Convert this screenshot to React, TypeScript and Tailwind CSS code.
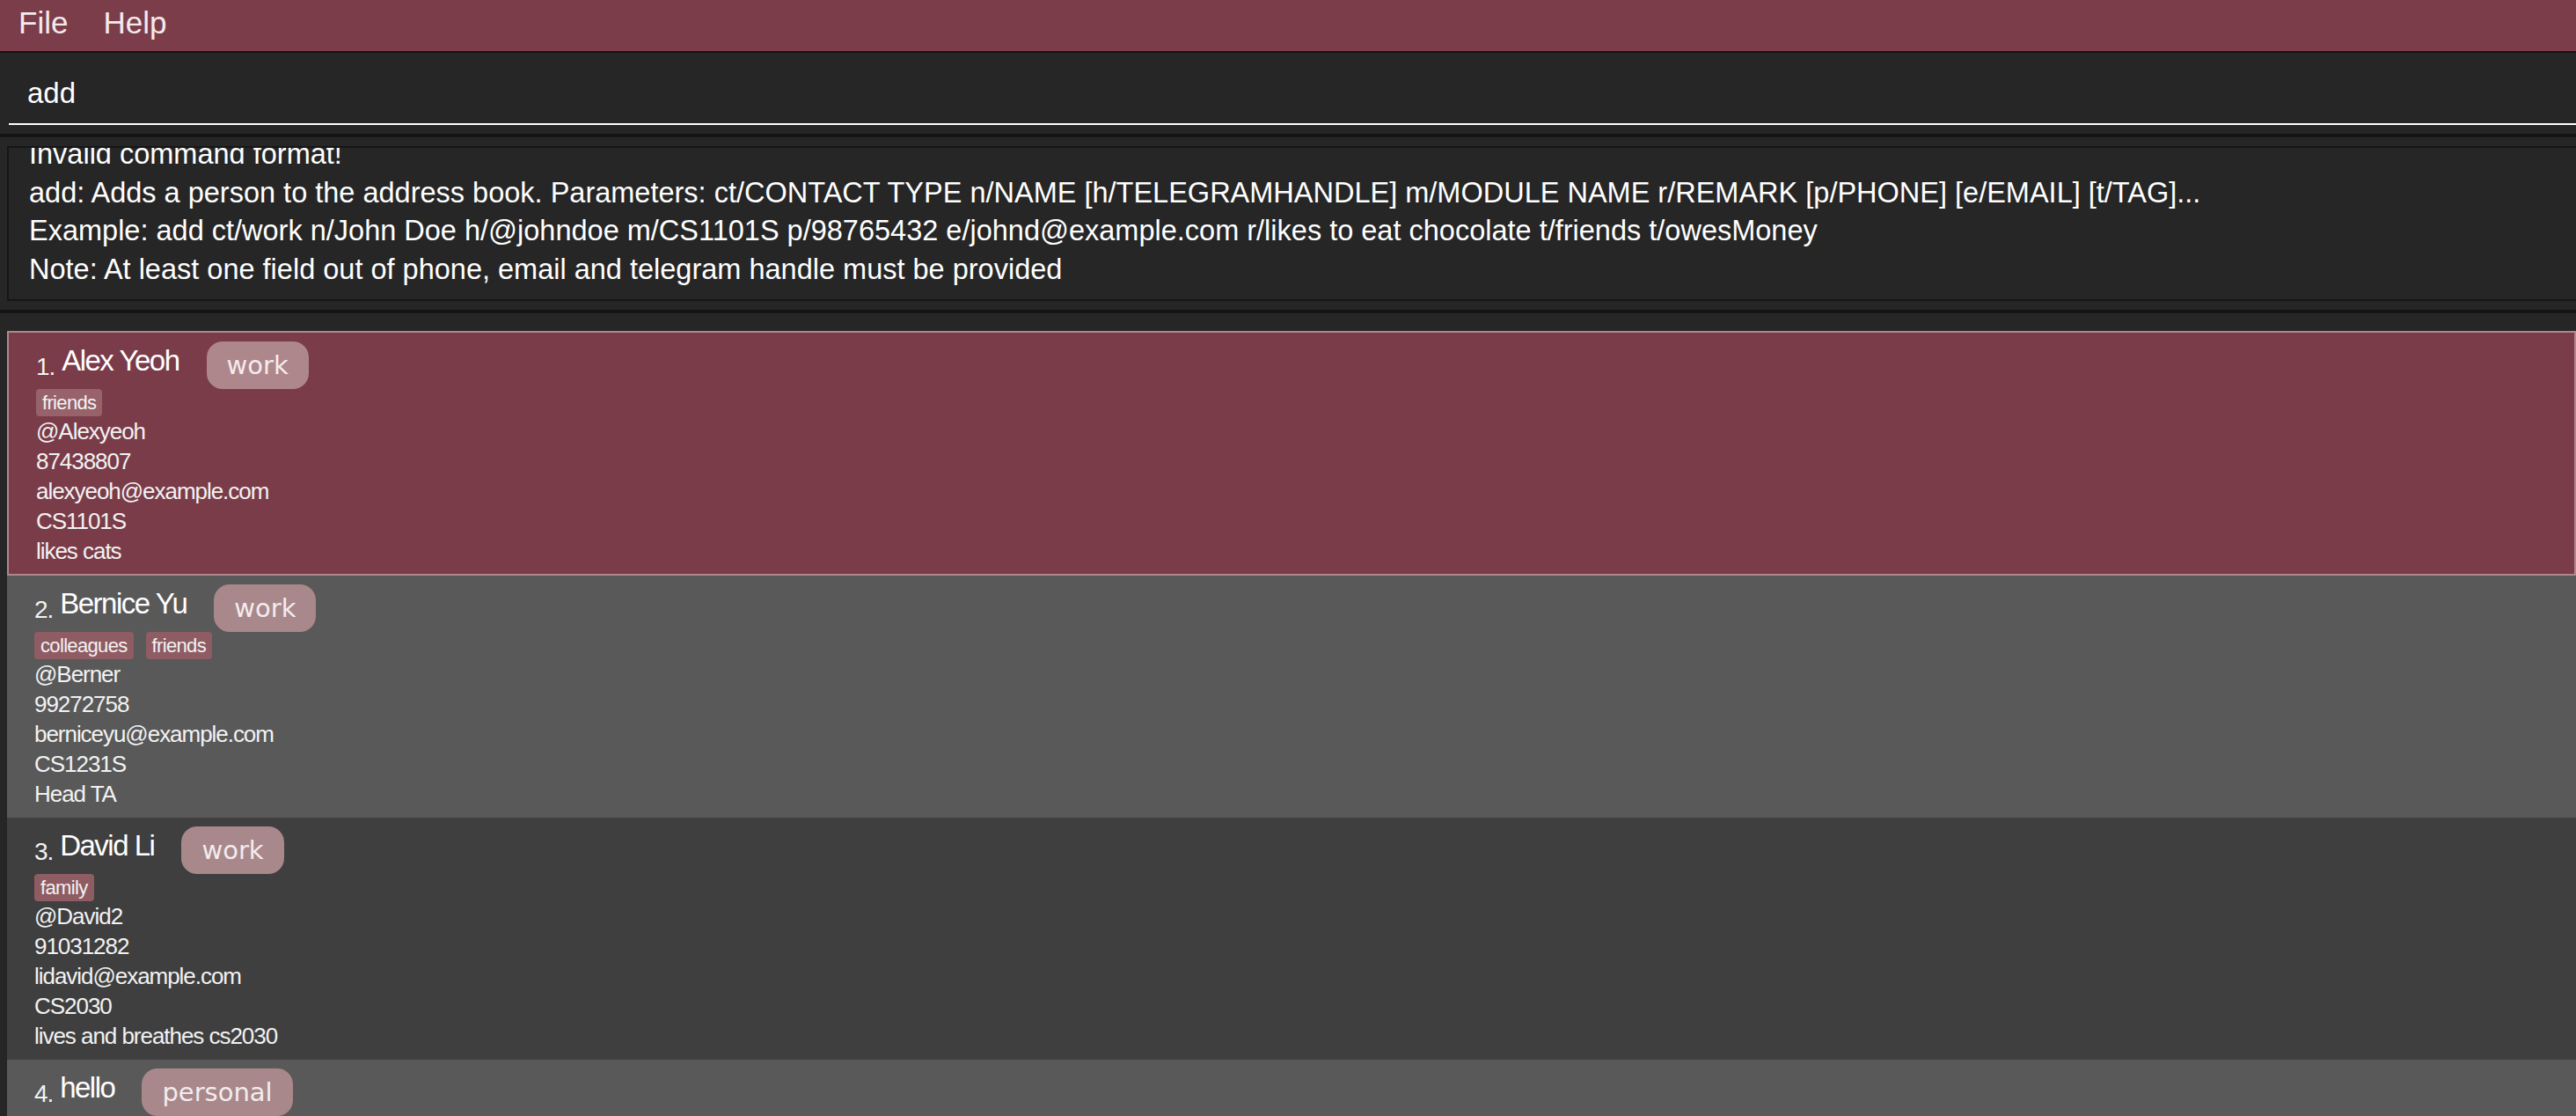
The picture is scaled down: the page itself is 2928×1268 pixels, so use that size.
import React from 'react';

interface IPerson {
  name: string
  type: string
  tags: string[]
  handle: string
  phone: string
  email: string
  module: string
  remark: string
}

const people: IPerson[] = [
  { name: 'Alex Yeoh', type: 'work', tags: ['friends'], handle: '@Alexyeoh', phone: '87438807', email: 'alexyeoh@example.com', module: 'CS1101S', remark: 'likes cats' },
  { name: 'Bernice Yu', type: 'work', tags: ['colleagues', 'friends'], handle: '@Berner', phone: '99272758', email: 'berniceyu@example.com', module: 'CS1231S', remark: 'Head TA' },
  { name: 'David Li', type: 'work', tags: ['family'], handle: '@David2', phone: '91031282', email: 'lidavid@example.com', module: 'CS2030', remark: 'lives and breathes cs2030' },
  { name: 'hello', type: 'personal', tags: ['friends'], handle: '@hello', phone: '12345678', email: 'hello@example.com', module: 'CS2103T', remark: 'new contact' },
];

const resultLines = [
  'Invalid command format!',
  'add: Adds a person to the address book. Parameters: ct/CONTACT TYPE n/NAME [h/TELEGRAMHANDLE] m/MODULE NAME r/REMARK [p/PHONE] [e/EMAIL] [t/TAG]...',
  'Example: add ct/work n/John Doe h/@johndoe m/CS1101S p/98765432 e/johnd@example.com r/likes to eat chocolate t/friends t/owesMoney',
  'Note: At least one field out of phone, email and telegram handle must be provided',
];

function PersonCard(props: { person: IPerson, index: number }) {
  const selected = props.index === 0;
  const bg = selected
    ? 'bg-[#7a3c49] border-2 border-[#b0878d] pt-[10px] pb-[9px]'
    : props.index % 2 === 1
      ? 'bg-[#595959] pt-[10px] pb-[10px]'
      : 'bg-[#3f3f3f] pt-[10px] pb-[10px]';
  const chip = selected ? 'bg-[#ae878c]' : 'bg-[#a8888b]';
  const tag = selected ? 'bg-[#97626a]' : 'bg-[#8f5c64]';

  return (
    <div className={`${bg} pl-[31px] text-[#f2f2f2]`}>
      <div className="flex items-start h-[54px]">
        <span className="text-[28px] leading-[34px] mt-[12px] tracking-[-0.04em]">{props.index + 1}.</span>
        <span className="text-[33px] leading-[40px] mt-[2px] ml-[8px] tracking-[-0.045em] text-white">{props.person.name}</span>
        <span className={`${chip} ml-[31px] h-[54px] px-[23px] pt-[9px] rounded-[18px] text-[29px] leading-[36px] text-[#f4ecee] font-['DejaVu_Sans',sans-serif]`}>
          {props.person.type}
        </span>
      </div>
      <div className="flex gap-[14px] h-[31px]">
        {props.person.tags.map((t) => (
          <span key={t} className={`${tag} rounded-[4px] px-[7px] text-[22px] leading-[31px] tracking-[-0.03em]`}>{t}</span>
        ))}
      </div>
      <div className="flex flex-col text-[26px] leading-[34px] tracking-[-0.04em]">
        <span>{props.person.handle}</span>
        <span>{props.person.phone}</span>
        <span>{props.person.email}</span>
        <span>{props.person.module}</span>
        <span>{props.person.remark}</span>
      </div>
    </div>
  );
}

function App() {
  return (
    <div className="h-[1268px] w-full overflow-hidden bg-[#272727] font-['Liberation_Sans',Arial,sans-serif]">
      <div className="h-[58px] bg-[#7b3d4a] flex gap-[40px] pl-[21px] pt-[6px] text-[35px] leading-[40px] text-[#f3eaec]">
        <span>File</span>
        <span>Help</span>
      </div>
      <div className="h-[2px] bg-[#141414]" />
      <div className="h-[92px] bg-[#262626] pl-[10px]">
        <div className="h-[82px] border-b-2 border-white pl-[21px] pt-[26px] text-[33px] leading-[40px] text-white">
          add
        </div>
      </div>
      <div className="h-[4px] bg-[#141414]" />
      <div className="bg-[#262626] pt-[10px] pb-[10px] pl-[8px]">
        <div className="h-[176px] border-y-2 border-l-2 border-[#161616] overflow-hidden pl-[23px]">
          <div className="mt-[-14px] flex flex-col text-[32.5px] leading-[43.5px] text-white whitespace-nowrap">
            {resultLines.map((l) => (
              <span key={l}>{l}</span>
            ))}
          </div>
        </div>
      </div>
      <div className="h-[4px] bg-[#141414]" />
      <div className="bg-[#262626] pt-[20px] pl-[8px]">
        <div className="flex flex-col">
          {people.map((p, i) => (
            <PersonCard key={p.name} person={p} index={i} />
          ))}
        </div>
      </div>
    </div>
  );
}

export default App;
